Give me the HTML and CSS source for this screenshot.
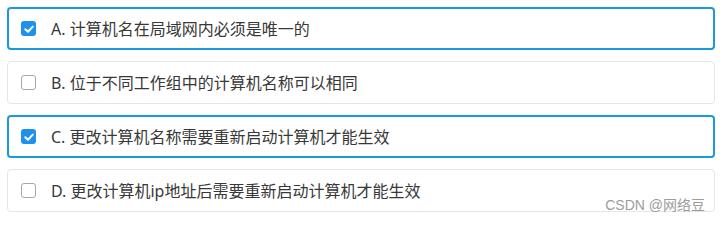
FILE: index.html
```html
<!DOCTYPE html>
<html lang="zh-CN">
<head>
<meta charset="utf-8">
<link rel="stylesheet" href="styles.css">
</head>
<body>
<div class="options">
  <div class="option selected">
    <span class="box checked"><svg viewBox="0 0 14 14" width="14" height="14"><path d="M3.3 7.2 L6 9.8 L10.8 4.6" fill="none" stroke="#fff" stroke-width="2" stroke-linecap="round" stroke-linejoin="round"/></svg></span>
    <span class="label">A. 计算机名在局域网内必须是唯一的</span>
  </div>
  <div class="option">
    <span class="box"></span>
    <span class="label">B. 位于不同工作组中的计算机名称可以相同</span>
  </div>
  <div class="option selected">
    <span class="box checked"><svg viewBox="0 0 14 14" width="14" height="14"><path d="M3.3 7.2 L6 9.8 L10.8 4.6" fill="none" stroke="#fff" stroke-width="2" stroke-linecap="round" stroke-linejoin="round"/></svg></span>
    <span class="label">C. 更改计算机名称需要重新启动计算机才能生效</span>
  </div>
  <div class="option">
    <span class="box"></span>
    <span class="label">D. 更改计算机ip地址后需要重新启动计算机才能生效</span>
  </div>
</div>
<div class="watermark">CSDN @网络豆</div>
</body>
</html>
```
FILE: styles.css
```css
html, body {
  margin: 0;
  padding: 0;
  background: #ffffff;
}
body {
  position: relative;
  width: 720px;
  height: 221px;
  overflow: hidden;
  font-family: "Noto Sans", "Noto Sans CJK SC", sans-serif;
}
.options {
  display: flex;
  flex-direction: column;
  gap: 11px;
  padding: 7px 5px 0 7px;
}
.option {
  box-sizing: border-box;
  height: 43px;
  display: flex;
  align-items: center;
  gap: 15px;
  border: 1px solid #e6e6e6;
  border-radius: 4px;
  padding-left: 13px;
  background: #fff;
}
.option.selected {
  border: 2px solid #1a9ad8;
  padding-left: 12px;
}
.box {
  box-sizing: border-box;
  width: 15px;
  height: 15px;
  flex: none;
  border: 1.5px solid #a8a8a8;
  border-radius: 3px;
  background: #fff;
  display: flex;
  align-items: center;
  justify-content: center;
}
.box.checked {
  border: none;
  background: #1e90ee;
}
.box svg {
  display: block;
}
.label {
  font-size: 16px;
  line-height: 20px;
  color: #383838;
  white-space: nowrap;
}
.watermark {
  position: absolute;
  right: 15px;
  top: 198px;
  font-size: 14px;
  line-height: 14px;
  color: #9c9c9c;
  white-space: nowrap;
  font-family: "Liberation Sans", "Noto Sans CJK SC", sans-serif;
}
```
